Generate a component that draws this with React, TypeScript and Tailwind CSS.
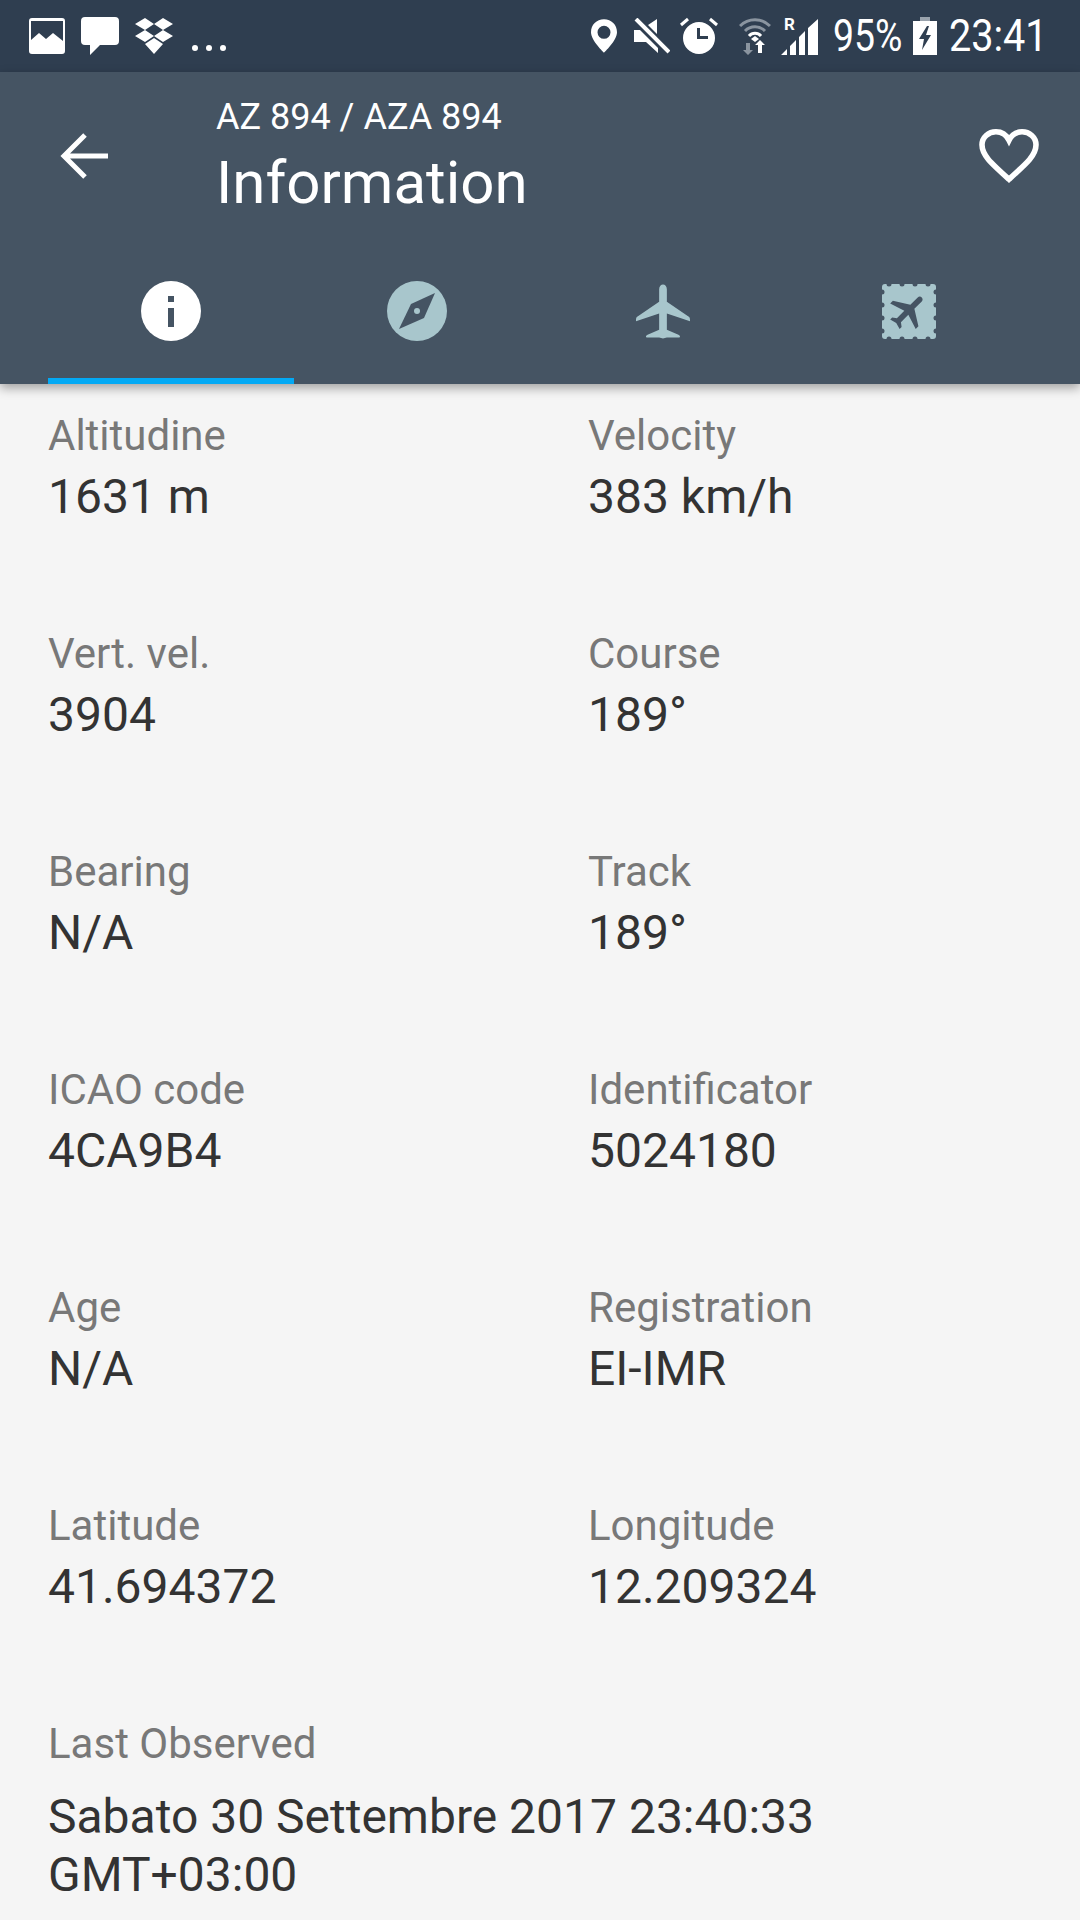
const font = { fontFamily: "Roboto, sans-serif" };

const fields = [
  ["Altitudine", "1631 m", "Velocity", "383 km/h"],
  ["Vert. vel.", "3904", "Course", "189°"],
  ["Bearing", "N/A", "Track", "189°"],
  ["ICAO code", "4CA9B4", "Identificator", "5024180"],
  ["Age", "N/A", "Registration", "EI-IMR"],
  ["Latitude", "41.694372", "Longitude", "12.209324"],
];

function Field({ label, value }: { label: string; value: string }) {
  return (
    <div className="h-[218px]">
      <div className="text-[42px] leading-[46px] text-[#787878]">{label}</div>
      <div className="mt-[10px] text-[48px] leading-[56px] text-[#333333]">{value}</div>
    </div>
  );
}

function StatusBar() {
  return (
    <div className="flex h-[72px] items-center justify-between bg-[#2f3e50] pl-[29px] pr-[31px]">
      <div className="flex items-center gap-[16px]">
        <svg width="36" height="36" viewBox="0 0 36 36" fill="white">
          <path fillRule="evenodd" d="M3 0h30a3 3 0 0 1 3 3v30a3 3 0 0 1-3 3H3a3 3 0 0 1-3-3V3a3 3 0 0 1 3-3zM2 3v19l8-7 7 6 7-6 10 8V3z" />
        </svg>
        <svg width="38" height="38" viewBox="0 0 38 38" fill="white">
          <path d="M4 0h30a4 4 0 0 1 4 4v20a4 4 0 0 1-4 4H19l-10 10v-10H4a4 4 0 0 1-4-4V4a4 4 0 0 1 4-4z" />
        </svg>
        <svg width="38" height="36" viewBox="0 0 38 36" fill="white">
          <path d="M10 0l9 6-9 6-10-6zM28 0l10 6-10 6-9-6zM0 18l10-6 9 6-9 6zM38 18l-10-6-9 6 9 6zM10 26l9-6 9 6-9 10z" />
        </svg>
        <div className="ml-[3px] mt-[24px] flex gap-[8px]">
          <span className="h-[6px] w-[6px] rounded-full bg-white" />
          <span className="h-[6px] w-[6px] rounded-full bg-white" />
          <span className="h-[6px] w-[6px] rounded-full bg-white" />
        </div>
      </div>
      <div className="flex items-center">
        <svg width="26" height="36" viewBox="0 0 28 36" fill="white">
          <path fillRule="evenodd" d="M14 0C6 0 0 6 0 14c0 9 14 22 14 22s14-13 14-22C28 6 22 0 14 0zm0 7a7 7 0 1 1 0 14 7 7 0 0 1 0-14z" />
        </svg>
        <svg className="ml-[17px]" width="36" height="36" viewBox="0 0 36 36" fill="white">
          <path d="M23 1v15L14 7zM0 12h6l18 18v5L12 24H0z" />
          <path d="M2 1L35 34" stroke="white" strokeWidth="4" />
        </svg>
        <svg className="ml-[10px]" width="38" height="38" viewBox="0 0 38 38" fill="white">
          <path fillRule="evenodd" d="M19 5a16 16 0 1 1 0 32 16 16 0 0 1 0-32zM17 11v11h11v-3h-8v-8z" />
          <path d="M1 8l7-6" stroke="white" strokeWidth="3" />
          <path d="M37 8l-7-6" stroke="white" strokeWidth="3" />
        </svg>
        <svg className="ml-[21px]" width="32" height="38" viewBox="0 0 32 38" fill="none">
          <path d="M1 9a21 21 0 0 1 30 0" stroke="#8a949f" strokeWidth="3" />
          <path d="M6 14a14 14 0 0 1 20 0" stroke="#8a949f" strokeWidth="3" />
          <path d="M10 19a8 8 0 0 1 12 0" stroke="white" strokeWidth="3" />
          <path d="M16 19l4 3-4 3-4-3z" fill="white" />
          <path d="M7 26h4v7h3l-5 5-5-5h3z" fill="#8a949f" />
          <path d="M21 23l5 5h-3v8h-4v-8h-3z" fill="white" />
        </svg>
        <div className="relative ml-[10px] h-[38px] w-[38px]">
          <svg width="38" height="38" viewBox="0 0 38 38" fill="white">
            <path d="M0 38l6-6v6zM9 29l6-6v15H9zM18 20l6-6v24h-6zM27 11l10-9v36H27z" />
          </svg>
          <span className="absolute left-[3px] top-[-3px] text-[17px] font-bold leading-[20px] text-white">R</span>
        </div>
        <span className="ml-[14px] w-[70px] origin-left scale-x-[0.85] whitespace-nowrap text-[44px] leading-[50px] text-white">95%</span>
        <svg className="ml-[10px]" width="24" height="38" viewBox="0 0 24 38">
          <path d="M7 0h10v4H7z" fill="#9aa3ad" />
          <path fillRule="evenodd" fill="white" d="M0 4h24v34H0zM14 9L6 22h5l-2 11 9-15h-5l3-9z" />
        </svg>
        <span className="ml-[12px] w-[100px] origin-left scale-x-[0.9] whitespace-nowrap text-[44px] leading-[50px] text-white">23:41</span>
      </div>
    </div>
  );
}

function Tabs() {
  return (
    <div className="mx-[48px] grid grid-cols-4">
      <div className="flex h-[126px] items-start justify-center border-b-[6px] border-[#03a9f4] pt-[23px]">
        <svg width="60" height="60" viewBox="0 0 60 60">
          <circle cx="30" cy="30" r="30" fill="white" />
          <rect x="27" y="15" width="6" height="6" fill="#455463" />
          <rect x="27" y="27" width="6" height="19" fill="#455463" />
        </svg>
      </div>
      <div className="flex h-[126px] items-start justify-center pt-[23px]">
        <svg width="60" height="60" viewBox="0 0 60 60">
          <circle cx="30" cy="30" r="30" fill="#a8c6cc" />
          <path d="M48 12L37 37 12 48 24 23z" fill="#455463" />
          <circle cx="30" cy="30" r="3" fill="#a8c6cc" />
        </svg>
      </div>
      <div className="flex h-[126px] items-start justify-center pt-[26px]">
        <svg width="54" height="55" viewBox="0 0 56 56" fill="#a8c6cc">
          <path d="M24 5c0-3 2-5 4-5s4 2 4 5v13l22 15c2 1 2 2 2 5L32 30v17l12 5c2 1 2 2 1 3H32l-4 1-4-1H11c-1-1-1-2 1-3l12-5V30L0 38c0-3 0-4 2-5l22-15z" />
        </svg>
      </div>
      <div className="flex h-[126px] items-start justify-center pt-[26px]">
        <svg width="54" height="55" viewBox="0 0 54 55">
          <rect x="0" y="0" width="54" height="55" rx="3" fill="#a8c6cc" />
          <g fill="#455463">
            {[7, 20, 33, 46].map((p) => (
              <g key={p}>
                <circle cx={p} cy="0" r="2.5" />
                <circle cx={p} cy="55" r="2.5" />
                <circle cx="0" cy={p + 1} r="2.5" />
                <circle cx="54" cy={p + 1} r="2.5" />
              </g>
            ))}
            <path
              transform="translate(27 27.5) rotate(45) scale(1.9) translate(-12 -12)"
              d="M21 16v-2l-8-5V3.5c0-.83-.67-1.5-1.5-1.5S10 2.67 10 3.5V9l-8 5v2l8-2.5V19l-2 1.5V22l3.5-1 3.5 1v-1.5L13 19v-5.5l8 2.5z"
            />
          </g>
        </svg>
      </div>
    </div>
  );
}

function Header() {
  return (
    <div className="relative z-10 bg-[#455463] shadow-[0_4px_10px_rgba(0,0,0,0.35)]">
      <div className="flex h-[186px] items-start">
        <svg className="ml-[60px] mt-[60px]" width="48" height="48" viewBox="0 0 48 48" fill="none" stroke="white" strokeWidth="5">
          <path d="M48 24H4M25 3L4 24l21 21" />
        </svg>
        <div className="ml-[108px] mt-[22px] flex-1 text-white">
          <div className="text-[36px] leading-[46px]">AZ 894 / AZA 894</div>
          <div className="mt-[9px] text-[60px] leading-[68px]">Information</div>
        </div>
        <svg className="mr-[41px] mt-[57px]" width="60" height="54" viewBox="0 0 64 58" fill="none" stroke="white" strokeWidth="6">
          <path d="M32 54C12 36 3 28 3 17 3 9 10 3 18 3c6 0 11 3 14 9 3-6 8-9 14-9 8 0 15 6 15 14 0 11-9 19-29 37z" />
        </svg>
      </div>
      <Tabs />
    </div>
  );
}

export default function App() {
  return (
    <div className="h-[1920px] w-[1080px] overflow-hidden bg-[#f5f5f5]" style={font}>
      <StatusBar />
      <Header />
      <div className="px-[48px] pt-[29px]">
        <div className="grid grid-cols-[540px_1fr]">
          {fields.map(([a, b, c, d]) => (
            <div key={a} className="contents">
              <Field label={a} value={b} />
              <Field label={c} value={d} />
            </div>
          ))}
        </div>
        <div className="text-[42px] leading-[46px] text-[#787878]">Last Observed</div>
        <div className="mt-[21px] text-[48px] leading-[58px] text-[#333333]">
          Sabato 30 Settembre 2017 23:40:33
          <br />
          GMT+03:00
        </div>
      </div>
    </div>
  );
}
